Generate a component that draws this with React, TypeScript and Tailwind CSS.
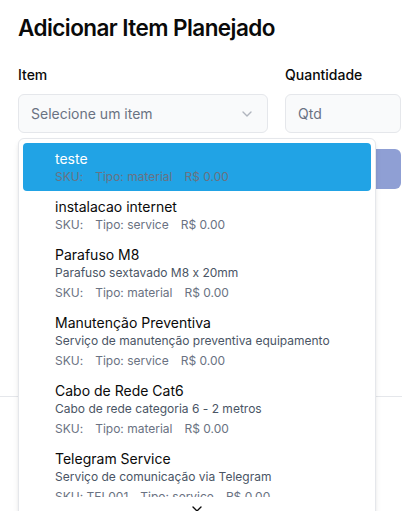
import { ChevronDown } from "lucide-react";

type Option = {
  name: string;
  description?: string;
  sku: string;
  tipo: string;
  price: string;
};

const options: Option[] = [
  { name: "teste", sku: "", tipo: "material", price: "R$ 0.00" },
  { name: "instalacao internet", sku: "", tipo: "service", price: "R$ 0.00" },
  {
    name: "Parafuso M8",
    description: "Parafuso sextavado M8 x 20mm",
    sku: "",
    tipo: "material",
    price: "R$ 0.00",
  },
  {
    name: "Manutenção Preventiva",
    description: "Serviço de manutenção preventiva equipamento",
    sku: "",
    tipo: "service",
    price: "R$ 0.00",
  },
  {
    name: "Cabo de Rede Cat6",
    description: "Cabo de rede categoria 6 - 2 metros",
    sku: "",
    tipo: "material",
    price: "R$ 0.00",
  },
  {
    name: "Telegram Service",
    description: "Serviço de comunicação via Telegram",
    sku: "TEL001",
    tipo: "service",
    price: "R$ 0.00",
  },
];

export default function App() {
  const highlighted = 0;

  return (
    <div
      className="relative h-[511px] w-[402px] overflow-hidden bg-white text-[#0a0a0a] [font-feature-settings:'calt'_0]"
      style={{ fontFamily: "Inter, 'Noto Sans', sans-serif" }}
    >
      <div className="pl-[18px] pr-px pt-3">
        {/* TITLE */}
        <h1 className="text-[22.5px] leading-8 font-semibold tracking-tight">
          Adicionar Item Planejado
        </h1>

        {/* FORM ROW */}
        <div className="mt-[21px] flex gap-[17px]">
          <div className="w-[250px]">
            <label className="block text-sm leading-5 font-medium">Item</label>
            <button className="mt-[9px] flex h-[39px] w-full items-center justify-between rounded-md border border-gray-200 bg-gray-50 px-3 text-sm text-gray-500">
              <span>Selecione um item</span>
              <ChevronDown size={16} className="opacity-50" />
            </button>
          </div>

          <div className="flex-1">
            <label className="block text-sm leading-5 font-medium">
              Quantidade
            </label>
            <div className="mt-[9px] flex h-[39px] w-full items-center rounded-md border border-gray-200 bg-gray-50 px-3 text-sm text-gray-500">
              Qtd
            </div>
          </div>
        </div>

        {/* SUBMIT */}
        <button className="mt-4 h-10 w-full rounded-md bg-[#8f9fd4] text-sm font-medium text-white">
          Adicionar
        </button>
      </div>

      {/* FOOTER LINE */}
      <div className="mt-[207px] border-t border-gray-200" />

      {/* ================= DROPDOWN ================= */}
      <div className="absolute left-[18px] top-[138px] w-[358px] rounded-md border border-gray-200 bg-white shadow-md">
        <div className="h-[358px] overflow-hidden px-1 pt-1">
          {options.map((opt, i) => (
            <div
              key={opt.name}
              className={`rounded-sm py-1.5 pl-8 pr-2 ${
                i === highlighted ? "bg-[#21a3e5] text-white" : ""
              }`}
            >
              <div className="text-sm leading-5">{opt.name}</div>
              {opt.description && (
                <div
                  className={`mb-1 text-xs leading-4 ${
                    i === highlighted ? "text-white" : "text-gray-600"
                  }`}
                >
                  {opt.description}
                </div>
              )}
              <div className="flex gap-3 text-xs leading-4 text-gray-500">
                <span>SKU: {opt.sku}</span>
                <span>Tipo: {opt.tipo}</span>
                <span>{opt.price}</span>
              </div>
            </div>
          ))}
        </div>
        <div className="flex justify-center py-1">
          <ChevronDown size={16} />
        </div>
      </div>
    </div>
  );
}
